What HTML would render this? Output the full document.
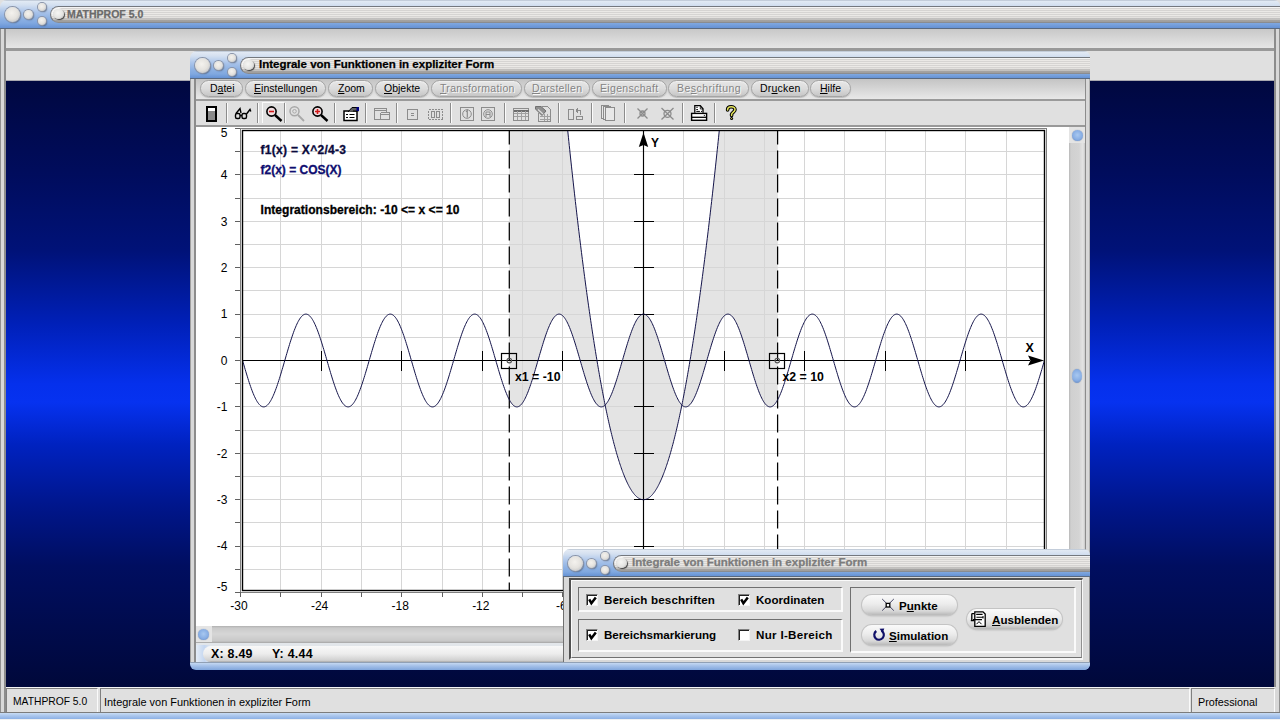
<!DOCTYPE html>
<html><head><meta charset="utf-8">
<style>
*{margin:0;padding:0;box-sizing:border-box}
html,body{width:1280px;height:720px;overflow:hidden;background:#e0e0e0;font-family:"Liberation Sans",sans-serif}
.a{position:absolute}
.tb{position:absolute;height:28px;background:linear-gradient(#a4b0c0 0px,#e2eaf4 1px,#d4e0f0 5px,#aac4ea 12px,#8cb0e2 19px,#80a8e0 23px,#6692d4 27px,#5a6a80 27px,#5a6a80 28px);border-top-left-radius:7px;border-top-right-radius:6px;overflow:hidden}
.pill{position:absolute;left:50px;top:6px;height:17px;right:0;border-radius:9px 0 0 9px;border:1px solid #74787e;border-right:none;border-bottom-color:#8a8c90;background:linear-gradient(rgba(0,0,0,0) 0px,rgba(0,0,0,0) 10px,rgba(90,90,90,.22) 12px,rgba(50,50,50,.45) 15px),repeating-linear-gradient(#ebe9e6 0px,#ebe9e6 1px,#d6d4d2 1px,#d6d4d2 2px);box-shadow:inset 0 1px 0 #f4f4f4}
.circ{position:absolute;border-radius:50%;background:radial-gradient(circle at 45% 40%,#f4f2ee 0%,#e4e2de 50%,#c8c8c8 78%,#7a8090 100%);box-shadow:0 0 0 1px #8a94a8,1px 1px 1.5px rgba(30,40,60,.6)}
.pc{position:absolute;left:2px;top:1.5px;width:10.5px;height:10.5px;border-radius:50%;background:radial-gradient(circle at 45% 40%,#f6f6f4 0%,#e4e4e2 55%,#c0c0c0 80%,#505050 100%);box-shadow:1px 1px 1px #404040,-1px -1px 1px #f8f8f8}
.ttl{position:absolute;top:-1px;font-weight:bold;font-size:11.5px;line-height:15px;white-space:nowrap;-webkit-text-stroke:0.25px currentColor}
.sep{position:absolute;width:2px;border-left:1px solid #a0a0a0;border-right:1px solid #f8f8f8}
.mp{position:absolute;top:80px;height:17px;border-radius:9px;background:linear-gradient(#e6e6e6,#dcdcdc 50%,#c6c6c6);border:1px solid #a4a4a4;box-shadow:0 1px 1px rgba(0,0,0,.18),inset 0 1px 1px #f0f0f0;font-size:10.5px;line-height:15px;text-align:left;padding-left:9px;color:#000;white-space:nowrap}
.mp.d{color:#848484;text-shadow:1px 1px 0 #f8f8f8}
.cb{position:absolute;width:12px;height:12px;background:#fff;border-top:1px solid #808080;border-left:1px solid #808080;border-right:1px solid #f4f4f4;border-bottom:1px solid #f4f4f4;box-shadow:inset 1px 1px 0 #202020}
.cb svg{position:absolute;left:0;top:0}
.dt{position:absolute;font-weight:bold;font-size:11.6px;line-height:14px;white-space:nowrap;color:#000}
.btn{position:absolute;border-radius:10px;background:linear-gradient(#fafafa 0%,#ececec 45%,#d8d8d8 80%,#b8b8b8 100%);box-shadow:0 0 0 1px #c4c4c4,0 1px 2px rgba(0,0,0,.25)}
.sp{position:absolute;top:688px;height:24px;border-top:1px solid #808080;border-left:1px solid #808080;border-right:1px solid #fafafa;background:#e0e0e0}
.st{position:absolute;top:696px;line-height:12px;white-space:nowrap;color:#000}
.sc{position:absolute;border-radius:50%;background:radial-gradient(circle at 50% 45%,#a8c8f0 0%,#88aee4 55%,#6c90c8 85%,#a0a8b8 100%);box-shadow:0 0 1px #7080a0}
u{text-decoration:underline;text-decoration-thickness:1px;text-underline-offset:1px}
</style></head><body>

<!-- MDI blue background -->
<div class="a" style="left:6px;top:81px;width:1268px;height:606px;background:linear-gradient(#000840 0%,#000c5c 15%,#001278 28%,#0020b8 40%,#0530ec 50%,#0632f0 53%,#0022c0 60%,#00168c 70%,#000e60 80%,#00083a 100%)"></div>

<!-- main window frame -->
<div class="a" style="left:0;top:28px;width:6px;height:660px;background:#d8d8d8;border-left:1px solid #909090;border-right:2px solid #8c8c8c"></div>
<div class="a" style="left:1274px;top:28px;width:6px;height:660px;background:#d8d8d8;border-left:2px solid #8c8c8c;border-right:1px solid #909090"></div>
<div class="a" style="left:6px;top:29px;width:1268px;height:19px;background:linear-gradient(#c8c8c8,#e6e6e6)"></div>
<div class="a" style="left:6px;top:48px;width:1268px;height:3px;background:#999"></div>
<div class="a" style="left:6px;top:51px;width:1268px;height:29px;background:#e0e0e0"></div>
<div class="a" style="left:6px;top:80px;width:1268px;height:1px;background:#a8a8b0"></div>

<!-- main title bar -->
<div class="tb" style="left:0;top:0;width:1280px;height:29px;background:linear-gradient(#a4b0c0 0px,#e2eaf4 1px,#d4e0f0 5px,#aac4ea 12px,#8cb0e2 19px,#80a8e0 23px,#6692d4 28px,#5a6a80 28px,#5a6a80 29px)">
  <div class="pill"><div class="pc"></div>
   <div class="ttl" style="left:16px;top:0px;color:#6a6a6a;font-size:10.5px">MATHPROF 5.0</div></div>
  <div class="circ" style="left:5px;top:7px;width:15px;height:15px"></div>
  <div class="circ" style="left:24px;top:10px;width:9px;height:9px"></div>
  <div class="circ" style="left:38px;top:3px;width:8px;height:8px"></div>
  <div class="circ" style="left:38px;top:17px;width:8px;height:8px"></div>
</div>


<!-- ===== inner window ===== -->
<div class="a" style="left:190px;top:70px;width:900px;height:593px;background:#d8d8d8;border-left:1px solid #a0a0a0"></div>
<div class="a" style="left:194px;top:79px;width:2px;height:584px;background:#8c8c8c"></div>
<div class="a" style="left:1085px;top:79px;width:1px;height:584px;background:#8c8c8c"></div>
<div class="a" style="left:1089px;top:70px;width:1px;height:593px;background:#b0b0b0"></div>
<!-- menubar -->
<div class="a" style="left:196px;top:79px;width:889px;height:20px;background:linear-gradient(#c4c4c4,#e8e8e8)"></div>
<div class="a" style="left:196px;top:99px;width:889px;height:2px;background:#9a9a9a"></div>
<!-- toolbar -->
<div class="a" style="left:196px;top:101px;width:889px;height:24px;background:#e0e0e0"></div>
<div class="a" style="left:196px;top:125px;width:889px;height:2px;background:#999"></div>
<!-- client -->
<div class="a" style="left:196px;top:127px;width:874px;height:499px;background:#fff"></div>
<!--PLOT START-->
<svg class="a" style="left:196px;top:127px" width="874" height="499" viewBox="196 127 874 499">
<defs><clipPath id="pc"><rect x="243" y="131" width="801" height="459"/></clipPath></defs>
<g clip-path="url(#pc)"><path d="M509.17 -660.30 L509.84 -648.73 L510.51 -637.22 L511.18 -625.76 L511.85 -614.36 L512.53 -603.02 L513.20 -591.74 L513.87 -580.52 L514.54 -569.36 L515.21 -558.25 L515.88 -547.20 L516.56 -536.21 L517.23 -525.28 L517.90 -514.40 L518.57 -503.58 L519.24 -492.82 L519.91 -482.12 L520.59 -471.48 L521.26 -460.90 L521.93 -450.37 L522.60 -439.90 L523.27 -429.49 L523.94 -419.14 L524.62 -408.84 L525.29 -398.60 L525.96 -388.42 L526.63 -378.30 L527.30 -368.24 L527.97 -358.24 L528.65 -348.29 L529.32 -338.40 L529.99 -328.57 L530.66 -318.80 L531.33 -309.08 L532.00 -299.42 L532.68 -289.82 L533.35 -280.28 L534.02 -270.80 L534.69 -261.38 L535.36 -252.01 L536.03 -242.70 L536.71 -233.45 L537.38 -224.26 L538.05 -215.12 L538.72 -206.04 L539.39 -197.02 L540.06 -188.06 L540.74 -179.16 L541.41 -170.32 L542.08 -161.53 L542.75 -152.80 L543.42 -144.13 L544.09 -135.52 L544.77 -126.96 L545.44 -118.46 L546.11 -110.02 L546.78 -101.64 L547.45 -93.32 L548.12 -85.06 L548.80 -76.85 L549.47 -68.70 L550.14 -60.61 L550.81 -52.58 L551.48 -44.60 L552.15 -36.68 L552.83 -28.82 L553.50 -21.02 L554.17 -13.28 L554.84 -5.60 L555.51 2.03 L556.18 9.60 L556.86 17.11 L557.53 24.56 L558.20 31.96 L558.87 39.30 L559.54 46.57 L560.21 53.80 L560.89 60.96 L561.56 68.06 L562.23 75.11 L562.90 82.10 L563.57 89.03 L564.24 95.90 L564.92 102.72 L565.59 109.48 L566.26 116.18 L566.93 122.82 L567.60 129.40 L568.27 135.92 L568.95 142.39 L569.62 148.80 L570.29 155.15 L570.96 161.44 L571.63 167.68 L572.30 173.86 L572.98 179.97 L573.65 186.04 L574.32 192.04 L574.99 197.98 L575.66 203.87 L576.33 209.70 L577.01 215.47 L577.68 221.18 L578.35 226.84 L579.02 232.44 L579.69 237.98 L580.36 243.46 L581.04 248.88 L581.71 254.24 L582.38 259.55 L583.05 264.80 L583.72 269.99 L584.39 275.12 L585.07 280.20 L585.74 285.22 L586.41 290.18 L587.08 295.08 L587.75 299.92 L588.42 304.70 L589.10 309.43 L589.77 314.10 L590.44 318.71 L591.11 323.26 L591.78 327.76 L592.45 332.20 L593.13 336.57 L593.80 340.90 L594.47 345.16 L595.14 349.36 L595.81 353.51 L596.48 357.60 L597.16 361.63 L597.83 365.60 L598.50 369.52 L599.17 373.38 L599.84 377.18 L600.51 380.92 L601.19 384.60 L601.86 388.22 L602.53 391.79 L603.20 395.30 L603.87 398.75 L604.54 402.14 L605.22 405.48 L605.89 408.76 L606.56 411.98 L607.23 415.14 L607.90 418.24 L608.57 421.28 L609.25 424.27 L609.92 427.20 L610.59 430.07 L611.26 432.88 L611.93 435.64 L612.60 438.34 L613.28 440.98 L613.95 443.56 L614.62 446.08 L615.29 448.54 L615.96 450.95 L616.63 453.30 L617.31 455.59 L617.98 457.82 L618.65 460.00 L619.32 462.12 L619.99 464.18 L620.66 466.18 L621.34 468.12 L622.01 470.00 L622.68 471.83 L623.35 473.60 L624.02 475.31 L624.69 476.96 L625.37 478.56 L626.04 480.10 L626.71 481.57 L627.38 483.00 L628.05 484.36 L628.72 485.66 L629.40 486.91 L630.07 488.10 L630.74 489.23 L631.41 490.30 L632.08 491.32 L632.75 492.28 L633.43 493.17 L634.10 494.02 L634.77 494.80 L635.44 495.52 L636.11 496.19 L636.78 496.80 L637.46 497.35 L638.13 497.84 L638.80 498.28 L639.47 498.66 L640.14 498.98 L640.81 499.24 L641.49 499.44 L642.16 499.58 L642.83 499.67 L643.50 499.70 L644.17 499.67 L644.84 499.58 L645.51 499.44 L646.19 499.24 L646.86 498.98 L647.53 498.66 L648.20 498.28 L648.87 497.84 L649.54 497.35 L650.22 496.80 L650.89 496.19 L651.56 495.52 L652.23 494.80 L652.90 494.02 L653.57 493.17 L654.25 492.28 L654.92 491.32 L655.59 490.30 L656.26 489.23 L656.93 488.10 L657.60 486.91 L658.28 485.66 L658.95 484.36 L659.62 483.00 L660.29 481.57 L660.96 480.10 L661.63 478.56 L662.31 476.96 L662.98 475.31 L663.65 473.60 L664.32 471.83 L664.99 470.00 L665.66 468.12 L666.34 466.18 L667.01 464.18 L667.68 462.12 L668.35 460.00 L669.02 457.82 L669.69 455.59 L670.37 453.30 L671.04 450.95 L671.71 448.54 L672.38 446.08 L673.05 443.56 L673.72 440.98 L674.40 438.34 L675.07 435.64 L675.74 432.88 L676.41 430.07 L677.08 427.20 L677.75 424.27 L678.43 421.28 L679.10 418.24 L679.77 415.14 L680.44 411.98 L681.11 408.76 L681.78 405.48 L682.46 402.14 L683.13 398.75 L683.80 395.30 L684.47 391.79 L685.14 388.22 L685.81 384.60 L686.49 380.92 L687.16 377.18 L687.83 373.38 L688.50 369.52 L689.17 365.60 L689.84 361.63 L690.52 357.60 L691.19 353.51 L691.86 349.36 L692.53 345.16 L693.20 340.90 L693.87 336.57 L694.55 332.20 L695.22 327.76 L695.89 323.26 L696.56 318.71 L697.23 314.10 L697.90 309.43 L698.58 304.70 L699.25 299.92 L699.92 295.08 L700.59 290.18 L701.26 285.22 L701.93 280.20 L702.61 275.12 L703.28 269.99 L703.95 264.80 L704.62 259.55 L705.29 254.24 L705.96 248.88 L706.64 243.46 L707.31 237.98 L707.98 232.44 L708.65 226.84 L709.32 221.18 L709.99 215.47 L710.67 209.70 L711.34 203.87 L712.01 197.98 L712.68 192.04 L713.35 186.04 L714.02 179.97 L714.70 173.86 L715.37 167.68 L716.04 161.44 L716.71 155.15 L717.38 148.80 L718.05 142.39 L718.73 135.92 L719.40 129.40 L720.07 122.82 L720.74 116.18 L721.41 109.48 L722.08 102.72 L722.76 95.90 L723.43 89.03 L724.10 82.10 L724.77 75.11 L725.44 68.06 L726.11 60.96 L726.79 53.80 L727.46 46.57 L728.13 39.30 L728.80 31.96 L729.47 24.56 L730.14 17.11 L730.82 9.60 L731.49 2.03 L732.16 -5.60 L732.83 -13.28 L733.50 -21.02 L734.17 -28.82 L734.85 -36.68 L735.52 -44.60 L736.19 -52.58 L736.86 -60.61 L737.53 -68.70 L738.20 -76.85 L738.88 -85.06 L739.55 -93.32 L740.22 -101.64 L740.89 -110.02 L741.56 -118.46 L742.23 -126.96 L742.91 -135.52 L743.58 -144.13 L744.25 -152.80 L744.92 -161.53 L745.59 -170.32 L746.26 -179.16 L746.94 -188.06 L747.61 -197.02 L748.28 -206.04 L748.95 -215.12 L749.62 -224.26 L750.29 -233.45 L750.97 -242.70 L751.64 -252.01 L752.31 -261.38 L752.98 -270.80 L753.65 -280.28 L754.32 -289.82 L755.00 -299.42 L755.67 -309.08 L756.34 -318.80 L757.01 -328.57 L757.68 -338.40 L758.35 -348.29 L759.03 -358.24 L759.70 -368.24 L760.37 -378.30 L761.04 -388.42 L761.71 -398.60 L762.38 -408.84 L763.06 -419.14 L763.73 -429.49 L764.40 -439.90 L765.07 -450.37 L765.74 -460.90 L766.41 -471.48 L767.09 -482.12 L767.76 -492.82 L768.43 -503.58 L769.10 -514.40 L769.77 -525.28 L770.44 -536.21 L771.12 -547.20 L771.79 -558.25 L772.46 -569.36 L773.13 -580.52 L773.80 -591.74 L774.47 -603.02 L775.15 -614.36 L775.82 -625.76 L776.49 -637.22 L777.16 -648.73 L777.83 -660.30 L777.83 399.43 L777.16 400.65 L776.49 401.76 L775.82 402.77 L775.15 403.67 L774.47 404.47 L773.80 405.15 L773.13 405.73 L772.46 406.19 L771.79 406.54 L771.12 406.77 L770.44 406.89 L769.77 406.89 L769.10 406.77 L768.43 406.54 L767.76 406.19 L767.09 405.73 L766.41 405.16 L765.74 404.47 L765.07 403.68 L764.40 402.78 L763.73 401.77 L763.06 400.66 L762.38 399.44 L761.71 398.13 L761.04 396.73 L760.37 395.24 L759.70 393.66 L759.03 391.99 L758.35 390.25 L757.68 388.43 L757.01 386.55 L756.34 384.59 L755.67 382.58 L755.00 380.52 L754.32 378.40 L753.65 376.24 L752.98 374.04 L752.31 371.80 L751.64 369.54 L750.97 367.25 L750.29 364.95 L749.62 362.63 L748.95 360.32 L748.28 358.00 L747.61 355.68 L746.94 353.38 L746.26 351.10 L745.59 348.84 L744.92 346.61 L744.25 344.42 L743.58 342.26 L742.91 340.15 L742.23 338.09 L741.56 336.09 L740.89 334.15 L740.22 332.27 L739.55 330.47 L738.88 328.74 L738.20 327.09 L737.53 325.52 L736.86 324.04 L736.19 322.65 L735.52 321.36 L734.85 320.16 L734.17 319.06 L733.50 318.07 L732.83 317.19 L732.16 316.41 L731.49 315.74 L730.82 315.19 L730.14 314.74 L729.47 314.42 L728.80 314.20 L728.13 314.11 L727.46 314.13 L726.79 314.26 L726.11 314.51 L725.44 314.88 L724.77 315.36 L724.10 315.95 L723.43 316.65 L722.76 317.47 L722.08 318.39 L721.41 319.41 L720.74 320.54 L720.07 321.77 L719.40 323.09 L718.73 324.51 L718.05 326.02 L717.38 327.62 L716.71 329.29 L716.04 331.05 L715.37 332.88 L714.70 334.78 L714.02 336.74 L713.35 338.76 L712.68 340.84 L712.01 342.96 L711.34 345.13 L710.67 347.34 L709.99 349.58 L709.32 351.85 L708.65 354.13 L707.98 356.44 L707.31 358.76 L706.64 361.07 L705.96 363.39 L705.29 365.70 L704.62 368.00 L703.95 370.28 L703.28 372.54 L702.61 374.76 L701.93 376.95 L701.26 379.10 L700.59 381.20 L699.92 383.25 L699.25 385.24 L698.58 387.17 L697.90 389.04 L697.23 390.83 L696.56 392.55 L695.89 394.18 L695.22 395.74 L694.55 397.20 L693.87 398.57 L693.20 399.85 L692.53 401.03 L691.86 402.11 L691.19 403.08 L690.52 403.95 L689.84 404.71 L689.17 405.36 L688.50 405.90 L687.83 406.32 L687.16 406.63 L686.49 406.82 L685.81 406.90 L685.14 406.86 L684.47 406.71 L683.80 406.44 L683.13 406.05 L682.46 405.55 L681.78 404.94 L681.11 404.22 L680.44 403.39 L679.77 402.45 L679.10 401.41 L678.43 400.26 L677.75 399.01 L677.08 397.67 L676.41 396.24 L675.74 394.72 L675.07 393.11 L674.40 391.42 L673.72 389.65 L673.05 387.81 L672.38 385.90 L671.71 383.92 L671.04 381.89 L670.37 379.81 L669.69 377.68 L669.02 375.50 L668.35 373.29 L667.68 371.04 L667.01 368.77 L666.34 366.48 L665.66 364.17 L664.99 361.85 L664.32 359.54 L663.65 357.22 L662.98 354.91 L662.31 352.61 L661.63 350.34 L660.96 348.09 L660.29 345.87 L659.62 343.69 L658.95 341.55 L658.28 339.45 L657.60 337.41 L656.93 335.43 L656.26 333.51 L655.59 331.66 L654.92 329.88 L654.25 328.17 L653.57 326.55 L652.90 325.01 L652.23 323.56 L651.56 322.20 L650.89 320.94 L650.22 319.78 L649.54 318.72 L648.87 317.76 L648.20 316.91 L647.53 316.17 L646.86 315.54 L646.19 315.02 L645.51 314.62 L644.84 314.33 L644.17 314.16 L643.50 314.10 L642.83 314.16 L642.16 314.33 L641.49 314.62 L640.81 315.02 L640.14 315.54 L639.47 316.17 L638.80 316.91 L638.13 317.76 L637.46 318.72 L636.78 319.78 L636.11 320.94 L635.44 322.20 L634.77 323.56 L634.10 325.01 L633.43 326.55 L632.75 328.17 L632.08 329.88 L631.41 331.66 L630.74 333.51 L630.07 335.43 L629.40 337.41 L628.72 339.45 L628.05 341.55 L627.38 343.69 L626.71 345.87 L626.04 348.09 L625.37 350.34 L624.69 352.61 L624.02 354.91 L623.35 357.22 L622.68 359.54 L622.01 361.85 L621.34 364.17 L620.66 366.48 L619.99 368.77 L619.32 371.04 L618.65 373.29 L617.98 375.50 L617.31 377.68 L616.63 379.81 L615.96 381.89 L615.29 383.92 L614.62 385.90 L613.95 387.81 L613.28 389.65 L612.60 391.42 L611.93 393.11 L611.26 394.72 L610.59 396.24 L609.92 397.67 L609.25 399.01 L608.57 400.26 L607.90 401.41 L607.23 402.45 L606.56 403.39 L605.89 404.22 L605.22 404.94 L604.54 405.55 L603.87 406.05 L603.20 406.44 L602.53 406.71 L601.86 406.86 L601.19 406.90 L600.51 406.82 L599.84 406.63 L599.17 406.32 L598.50 405.90 L597.83 405.36 L597.16 404.71 L596.48 403.95 L595.81 403.08 L595.14 402.11 L594.47 401.03 L593.80 399.85 L593.13 398.57 L592.45 397.20 L591.78 395.74 L591.11 394.18 L590.44 392.55 L589.77 390.83 L589.10 389.04 L588.42 387.17 L587.75 385.24 L587.08 383.25 L586.41 381.20 L585.74 379.10 L585.07 376.95 L584.39 374.76 L583.72 372.54 L583.05 370.28 L582.38 368.00 L581.71 365.70 L581.04 363.39 L580.36 361.07 L579.69 358.76 L579.02 356.44 L578.35 354.13 L577.68 351.85 L577.01 349.58 L576.33 347.34 L575.66 345.13 L574.99 342.96 L574.32 340.84 L573.65 338.76 L572.98 336.74 L572.30 334.78 L571.63 332.88 L570.96 331.05 L570.29 329.29 L569.62 327.62 L568.95 326.02 L568.27 324.51 L567.60 323.09 L566.93 321.77 L566.26 320.54 L565.59 319.41 L564.92 318.39 L564.24 317.47 L563.57 316.65 L562.90 315.95 L562.23 315.36 L561.56 314.88 L560.89 314.51 L560.21 314.26 L559.54 314.13 L558.87 314.11 L558.20 314.20 L557.53 314.42 L556.86 314.74 L556.18 315.19 L555.51 315.74 L554.84 316.41 L554.17 317.19 L553.50 318.07 L552.83 319.06 L552.15 320.16 L551.48 321.36 L550.81 322.65 L550.14 324.04 L549.47 325.52 L548.80 327.09 L548.12 328.74 L547.45 330.47 L546.78 332.27 L546.11 334.15 L545.44 336.09 L544.77 338.09 L544.09 340.15 L543.42 342.26 L542.75 344.42 L542.08 346.61 L541.41 348.84 L540.74 351.10 L540.06 353.38 L539.39 355.68 L538.72 358.00 L538.05 360.32 L537.38 362.63 L536.71 364.95 L536.03 367.25 L535.36 369.54 L534.69 371.80 L534.02 374.04 L533.35 376.24 L532.68 378.40 L532.00 380.52 L531.33 382.58 L530.66 384.59 L529.99 386.55 L529.32 388.43 L528.65 390.25 L527.97 391.99 L527.30 393.66 L526.63 395.24 L525.96 396.73 L525.29 398.13 L524.62 399.44 L523.94 400.66 L523.27 401.77 L522.60 402.78 L521.93 403.68 L521.26 404.47 L520.59 405.16 L519.91 405.73 L519.24 406.19 L518.57 406.54 L517.90 406.77 L517.23 406.89 L516.56 406.89 L515.88 406.77 L515.21 406.54 L514.54 406.19 L513.87 405.73 L513.20 405.15 L512.53 404.47 L511.85 403.67 L511.18 402.77 L510.51 401.76 L509.84 400.65 L509.17 399.43Z" fill="#e4e4e4"/></g>
<path d="M280.5 131V590M321.5 131V590M361.5 131V590M401.5 131V590M442.5 131V590M482.5 131V590M522.5 131V590M562.5 131V590M603.5 131V590M643.5 131V590M683.5 131V590M724.5 131V590M764.5 131V590M804.5 131V590M844.5 131V590M885.5 131V590M925.5 131V590M965.5 131V590M1006.5 131V590M243 569.5H1044M243 546.5H1044M243 522.5H1044M243 499.5H1044M243 476.5H1044M243 453.5H1044M243 430.5H1044M243 406.5H1044M243 383.5H1044M243 360.5H1044M243 337.5H1044M243 314.5H1044M243 290.5H1044M243 267.5H1044M243 244.5H1044M243 221.5H1044M243 198.5H1044M243 174.5H1044M243 151.5H1044" stroke="#d6d6d6" stroke-width="1" fill="none" shape-rendering="crispEdges"/>
<path d="M240.5 128V597M240 128.5H1047M1046.5 128V593M240 592.5H1047" stroke="#808080" fill="none" shape-rendering="crispEdges"/>
<rect x="242.5" y="130.5" width="802" height="460" stroke="#000" stroke-width="1.4" fill="none"/>
<path d="M235 592.5H240M235 569.5H240M235 546.5H240M235 522.5H240M235 499.5H240M235 476.5H240M235 453.5H240M235 430.5H240M235 406.5H240M235 383.5H240M235 360.5H240M235 337.5H240M235 314.5H240M235 290.5H240M235 267.5H240M235 244.5H240M235 221.5H240M235 198.5H240M235 174.5H240M235 151.5H240M235 128.5H240M240.5 592V597M280.5 592V597M321.5 592V597M361.5 592V597M401.5 592V597M442.5 592V597M482.5 592V597M522.5 592V597M562.5 592V597M603.5 592V597M643.5 592V597M683.5 592V597M724.5 592V597M764.5 592V597M804.5 592V597M844.5 592V597M885.5 592V597M925.5 592V597M965.5 592V597M1006.5 592V597M1046.5 592V597" stroke="#606060" fill="none" shape-rendering="crispEdges"/>
<text x="227.5" y="591.0" text-anchor="end" font-size="12" fill="#000">-5</text>
<text x="227.5" y="550.4" text-anchor="end" font-size="12" fill="#000">-4</text>
<text x="227.5" y="504.0" text-anchor="end" font-size="12" fill="#000">-3</text>
<text x="227.5" y="457.6" text-anchor="end" font-size="12" fill="#000">-2</text>
<text x="227.5" y="411.2" text-anchor="end" font-size="12" fill="#000">-1</text>
<text x="227.5" y="364.8" text-anchor="end" font-size="12" fill="#000">0</text>
<text x="227.5" y="318.4" text-anchor="end" font-size="12" fill="#000">1</text>
<text x="227.5" y="272.0" text-anchor="end" font-size="12" fill="#000">2</text>
<text x="227.5" y="225.6" text-anchor="end" font-size="12" fill="#000">3</text>
<text x="227.5" y="179.2" text-anchor="end" font-size="12" fill="#000">4</text>
<text x="227.5" y="137.0" text-anchor="end" font-size="12" fill="#000">5</text>
<text x="239.0" y="610" text-anchor="middle" font-size="12" fill="#000">-30</text>
<text x="319.6" y="610" text-anchor="middle" font-size="12" fill="#000">-24</text>
<text x="400.2" y="610" text-anchor="middle" font-size="12" fill="#000">-18</text>
<text x="480.8" y="610" text-anchor="middle" font-size="12" fill="#000">-12</text>
<text x="561.4" y="610" text-anchor="middle" font-size="12" fill="#000">-6</text>
<text x="642.0" y="610" text-anchor="middle" font-size="12" fill="#000">0</text>
<text x="722.6" y="610" text-anchor="middle" font-size="12" fill="#000">6</text>
<text x="803.2" y="610" text-anchor="middle" font-size="12" fill="#000">12</text>
<text x="883.8" y="610" text-anchor="middle" font-size="12" fill="#000">18</text>
<text x="964.4" y="610" text-anchor="middle" font-size="12" fill="#000">24</text>
<text x="1045.0" y="610" text-anchor="middle" font-size="12" fill="#000">30</text>
<path d="M243 360.5H1030M643.5 131V590" stroke="#000" stroke-width="1.15" fill="none"/>
<path d="M321.5 350.5V371M401.5 350.5V371M482.5 350.5V371M562.5 350.5V371M724.5 350.5V371M804.5 350.5V371M885.5 350.5V371M965.5 350.5V371M633.5 546.5H654M633.5 499.5H654M633.5 453.5H654M633.5 406.5H654M633.5 314.5H654M633.5 267.5H654M633.5 221.5H654M633.5 174.5H654" stroke="#000" stroke-width="1" fill="none" shape-rendering="crispEdges"/>
<path d="M1044 360.5L1028 355.5L1030.5 360.5L1028 365.5Z" fill="#000"/>
<path d="M643.5 132.5L638.8 147L643.5 145L648.2 147Z" fill="#000"/>
<text x="1025.5" y="352" font-size="12.5" font-weight="bold" fill="#000">X</text>
<text x="651" y="147" font-size="12" font-weight="bold" fill="#000">Y</text>
<path d="M509.3 126.6V590" stroke="#000" stroke-width="1.25" stroke-dasharray="18 6" fill="none" clip-path="url(#pc)"/>
<path d="M777.6 126.6V590" stroke="#000" stroke-width="1.25" stroke-dasharray="18 6" fill="none" clip-path="url(#pc)"/>
<g clip-path="url(#pc)" fill="none" stroke="#14144a" stroke-width="1.0">
<path d="M240.50 353.34 L241.17 355.64 L241.84 357.96 L242.52 360.27 L243.19 362.59 L243.86 364.91 L244.53 367.21 L245.20 369.50 L245.87 371.76 L246.55 374.00 L247.22 376.20 L247.89 378.36 L248.56 380.48 L249.23 382.55 L249.90 384.56 L250.58 386.51 L251.25 388.40 L251.92 390.22 L252.59 391.96 L253.26 393.63 L253.93 395.21 L254.61 396.71 L255.28 398.11 L255.95 399.42 L256.62 400.64 L257.29 401.75 L257.96 402.76 L258.64 403.66 L259.31 404.46 L259.98 405.15 L260.65 405.72 L261.32 406.19 L261.99 406.53 L262.67 406.77 L263.34 406.88 L264.01 406.89 L264.68 406.77 L265.35 406.54 L266.02 406.20 L266.70 405.74 L267.37 405.16 L268.04 404.48 L268.71 403.69 L269.38 402.78 L270.05 401.78 L270.73 400.67 L271.40 399.46 L272.07 398.15 L272.74 396.74 L273.41 395.25 L274.08 393.67 L274.76 392.01 L275.43 390.27 L276.10 388.45 L276.77 386.56 L277.44 384.61 L278.11 382.60 L278.79 380.53 L279.46 378.42 L280.13 376.26 L280.80 374.06 L281.47 371.82 L282.14 369.56 L282.82 367.27 L283.49 364.97 L284.16 362.66 L284.83 360.34 L285.50 358.02 L286.17 355.70 L286.85 353.40 L287.52 351.12 L288.19 348.86 L288.86 346.63 L289.53 344.44 L290.20 342.28 L290.88 340.17 L291.55 338.11 L292.22 336.11 L292.89 334.17 L293.56 332.29 L294.23 330.48 L294.91 328.75 L295.58 327.10 L296.25 325.53 L296.92 324.05 L297.59 322.66 L298.26 321.37 L298.94 320.17 L299.61 319.07 L300.28 318.08 L300.95 317.19 L301.62 316.42 L302.29 315.75 L302.97 315.19 L303.64 314.75 L304.31 314.42 L304.98 314.20 L305.65 314.11 L306.32 314.12 L307.00 314.26 L307.67 314.51 L308.34 314.87 L309.01 315.35 L309.68 315.94 L310.35 316.65 L311.03 317.46 L311.70 318.38 L312.37 319.40 L313.04 320.53 L313.71 321.76 L314.38 323.08 L315.06 324.50 L315.73 326.01 L316.40 327.60 L317.07 329.28 L317.74 331.03 L318.41 332.86 L319.09 334.76 L319.76 336.72 L320.43 338.74 L321.10 340.82 L321.77 342.94 L322.44 345.11 L323.12 347.32 L323.79 349.56 L324.46 351.83 L325.13 354.11 L325.80 356.42 L326.47 358.73 L327.15 361.05 L327.82 363.37 L328.49 365.68 L329.16 367.98 L329.83 370.26 L330.50 372.52 L331.18 374.74 L331.85 376.93 L332.52 379.08 L333.19 381.18 L333.86 383.23 L334.53 385.22 L335.21 387.15 L335.88 389.02 L336.55 390.81 L337.22 392.53 L337.89 394.17 L338.56 395.72 L339.24 397.19 L339.91 398.56 L340.58 399.84 L341.25 401.02 L341.92 402.10 L342.59 403.08 L343.27 403.94 L343.94 404.70 L344.61 405.35 L345.28 405.89 L345.95 406.32 L346.62 406.63 L347.30 406.82 L347.97 406.90 L348.64 406.86 L349.31 406.71 L349.98 406.44 L350.65 406.05 L351.33 405.56 L352.00 404.95 L352.67 404.23 L353.34 403.40 L354.01 402.46 L354.68 401.42 L355.36 400.27 L356.03 399.03 L356.70 397.69 L357.37 396.25 L358.04 394.73 L358.71 393.12 L359.39 391.43 L360.06 389.66 L360.73 387.82 L361.40 385.91 L362.07 383.94 L362.74 381.91 L363.42 379.83 L364.09 377.70 L364.76 375.52 L365.43 373.31 L366.10 371.06 L366.77 368.79 L367.45 366.50 L368.12 364.19 L368.79 361.88 L369.46 359.56 L370.13 357.24 L370.80 354.93 L371.48 352.63 L372.15 350.36 L372.82 348.11 L373.49 345.89 L374.16 343.71 L374.83 341.56 L375.51 339.47 L376.18 337.43 L376.85 335.45 L377.52 333.53 L378.19 331.67 L378.86 329.89 L379.54 328.19 L380.21 326.56 L380.88 325.02 L381.55 323.57 L382.22 322.22 L382.89 320.95 L383.57 319.79 L384.24 318.73 L384.91 317.77 L385.58 316.92 L386.25 316.18 L386.92 315.55 L387.60 315.03 L388.27 314.62 L388.94 314.33 L389.61 314.16 L390.28 314.10 L390.95 314.16 L391.63 314.33 L392.30 314.62 L392.97 315.02 L393.64 315.54 L394.31 316.17 L394.98 316.91 L395.66 317.75 L396.33 318.71 L397.00 319.77 L397.67 320.93 L398.34 322.19 L399.01 323.55 L399.69 325.00 L400.36 326.54 L401.03 328.16 L401.70 329.86 L402.37 331.64 L403.04 333.49 L403.72 335.41 L404.39 337.39 L405.06 339.43 L405.73 341.53 L406.40 343.67 L407.07 345.85 L407.75 348.07 L408.42 350.32 L409.09 352.59 L409.76 354.89 L410.43 357.20 L411.10 359.51 L411.78 361.83 L412.45 364.15 L413.12 366.46 L413.79 368.75 L414.46 371.02 L415.13 373.27 L415.81 375.48 L416.48 377.66 L417.15 379.79 L417.82 381.88 L418.49 383.91 L419.16 385.88 L419.84 387.79 L420.51 389.63 L421.18 391.40 L421.85 393.09 L422.52 394.70 L423.19 396.23 L423.87 397.66 L424.54 399.00 L425.21 400.25 L425.88 401.40 L426.55 402.44 L427.22 403.38 L427.90 404.21 L428.57 404.94 L429.24 405.55 L429.91 406.05 L430.58 406.43 L431.25 406.70 L431.93 406.86 L432.60 406.90 L433.27 406.82 L433.94 406.63 L434.61 406.32 L435.28 405.90 L435.96 405.36 L436.63 404.72 L437.30 403.96 L437.97 403.09 L438.64 402.12 L439.31 401.04 L439.99 399.86 L440.66 398.59 L441.33 397.21 L442.00 395.75 L442.67 394.20 L443.34 392.56 L444.02 390.84 L444.69 389.05 L445.36 387.19 L446.03 385.26 L446.70 383.27 L447.37 381.22 L448.05 379.12 L448.72 376.97 L449.39 374.78 L450.06 372.56 L450.73 370.30 L451.40 368.02 L452.08 365.72 L452.75 363.41 L453.42 361.10 L454.09 358.78 L454.76 356.46 L455.43 354.16 L456.11 351.87 L456.78 349.60 L457.45 347.36 L458.12 345.15 L458.79 342.98 L459.46 340.86 L460.14 338.78 L460.81 336.76 L461.48 334.79 L462.15 332.90 L462.82 331.07 L463.49 329.31 L464.17 327.63 L464.84 326.04 L465.51 324.53 L466.18 323.11 L466.85 321.78 L467.52 320.55 L468.20 319.42 L468.87 318.39 L469.54 317.47 L470.21 316.66 L470.88 315.95 L471.55 315.36 L472.23 314.88 L472.90 314.51 L473.57 314.26 L474.24 314.13 L474.91 314.11 L475.58 314.20 L476.26 314.41 L476.93 314.74 L477.60 315.18 L478.27 315.74 L478.94 316.40 L479.61 317.18 L480.29 318.06 L480.96 319.06 L481.63 320.15 L482.30 321.35 L482.97 322.64 L483.64 324.03 L484.32 325.51 L484.99 327.07 L485.66 328.72 L486.33 330.45 L487.00 332.26 L487.67 334.13 L488.35 336.07 L489.02 338.07 L489.69 340.13 L490.36 342.24 L491.03 344.40 L491.70 346.59 L492.38 348.82 L493.05 351.08 L493.72 353.36 L494.39 355.66 L495.06 357.98 L495.73 360.29 L496.41 362.61 L497.08 364.93 L497.75 367.23 L498.42 369.52 L499.09 371.78 L499.76 374.02 L500.44 376.22 L501.11 378.38 L501.78 380.50 L502.45 382.56 L503.12 384.58 L503.79 386.53 L504.47 388.42 L505.14 390.23 L505.81 391.98 L506.48 393.64 L507.15 395.22 L507.82 396.72 L508.50 398.12 L509.17 399.43 L509.84 400.65 L510.51 401.76 L511.18 402.77 L511.85 403.67 L512.53 404.47 L513.20 405.15 L513.87 405.73 L514.54 406.19 L515.21 406.54 L515.88 406.77 L516.56 406.89 L517.23 406.89 L517.90 406.77 L518.57 406.54 L519.24 406.19 L519.91 405.73 L520.59 405.16 L521.26 404.47 L521.93 403.68 L522.60 402.78 L523.27 401.77 L523.94 400.66 L524.62 399.44 L525.29 398.13 L525.96 396.73 L526.63 395.24 L527.30 393.66 L527.97 391.99 L528.65 390.25 L529.32 388.43 L529.99 386.55 L530.66 384.59 L531.33 382.58 L532.00 380.52 L532.68 378.40 L533.35 376.24 L534.02 374.04 L534.69 371.80 L535.36 369.54 L536.03 367.25 L536.71 364.95 L537.38 362.63 L538.05 360.32 L538.72 358.00 L539.39 355.68 L540.06 353.38 L540.74 351.10 L541.41 348.84 L542.08 346.61 L542.75 344.42 L543.42 342.26 L544.09 340.15 L544.77 338.09 L545.44 336.09 L546.11 334.15 L546.78 332.27 L547.45 330.47 L548.12 328.74 L548.80 327.09 L549.47 325.52 L550.14 324.04 L550.81 322.65 L551.48 321.36 L552.15 320.16 L552.83 319.06 L553.50 318.07 L554.17 317.19 L554.84 316.41 L555.51 315.74 L556.18 315.19 L556.86 314.74 L557.53 314.42 L558.20 314.20 L558.87 314.11 L559.54 314.13 L560.21 314.26 L560.89 314.51 L561.56 314.88 L562.23 315.36 L562.90 315.95 L563.57 316.65 L564.24 317.47 L564.92 318.39 L565.59 319.41 L566.26 320.54 L566.93 321.77 L567.60 323.09 L568.27 324.51 L568.95 326.02 L569.62 327.62 L570.29 329.29 L570.96 331.05 L571.63 332.88 L572.30 334.78 L572.98 336.74 L573.65 338.76 L574.32 340.84 L574.99 342.96 L575.66 345.13 L576.33 347.34 L577.01 349.58 L577.68 351.85 L578.35 354.13 L579.02 356.44 L579.69 358.76 L580.36 361.07 L581.04 363.39 L581.71 365.70 L582.38 368.00 L583.05 370.28 L583.72 372.54 L584.39 374.76 L585.07 376.95 L585.74 379.10 L586.41 381.20 L587.08 383.25 L587.75 385.24 L588.42 387.17 L589.10 389.04 L589.77 390.83 L590.44 392.55 L591.11 394.18 L591.78 395.74 L592.45 397.20 L593.13 398.57 L593.80 399.85 L594.47 401.03 L595.14 402.11 L595.81 403.08 L596.48 403.95 L597.16 404.71 L597.83 405.36 L598.50 405.90 L599.17 406.32 L599.84 406.63 L600.51 406.82 L601.19 406.90 L601.86 406.86 L602.53 406.71 L603.20 406.44 L603.87 406.05 L604.54 405.55 L605.22 404.94 L605.89 404.22 L606.56 403.39 L607.23 402.45 L607.90 401.41 L608.57 400.26 L609.25 399.01 L609.92 397.67 L610.59 396.24 L611.26 394.72 L611.93 393.11 L612.60 391.42 L613.28 389.65 L613.95 387.81 L614.62 385.90 L615.29 383.92 L615.96 381.89 L616.63 379.81 L617.31 377.68 L617.98 375.50 L618.65 373.29 L619.32 371.04 L619.99 368.77 L620.66 366.48 L621.34 364.17 L622.01 361.85 L622.68 359.54 L623.35 357.22 L624.02 354.91 L624.69 352.61 L625.37 350.34 L626.04 348.09 L626.71 345.87 L627.38 343.69 L628.05 341.55 L628.72 339.45 L629.40 337.41 L630.07 335.43 L630.74 333.51 L631.41 331.66 L632.08 329.88 L632.75 328.17 L633.43 326.55 L634.10 325.01 L634.77 323.56 L635.44 322.20 L636.11 320.94 L636.78 319.78 L637.46 318.72 L638.13 317.76 L638.80 316.91 L639.47 316.17 L640.14 315.54 L640.81 315.02 L641.49 314.62 L642.16 314.33 L642.83 314.16 L643.50 314.10 L644.17 314.16 L644.84 314.33 L645.51 314.62 L646.19 315.02 L646.86 315.54 L647.53 316.17 L648.20 316.91 L648.87 317.76 L649.54 318.72 L650.22 319.78 L650.89 320.94 L651.56 322.20 L652.23 323.56 L652.90 325.01 L653.57 326.55 L654.25 328.17 L654.92 329.88 L655.59 331.66 L656.26 333.51 L656.93 335.43 L657.60 337.41 L658.28 339.45 L658.95 341.55 L659.62 343.69 L660.29 345.87 L660.96 348.09 L661.63 350.34 L662.31 352.61 L662.98 354.91 L663.65 357.22 L664.32 359.54 L664.99 361.85 L665.66 364.17 L666.34 366.48 L667.01 368.77 L667.68 371.04 L668.35 373.29 L669.02 375.50 L669.69 377.68 L670.37 379.81 L671.04 381.89 L671.71 383.92 L672.38 385.90 L673.05 387.81 L673.72 389.65 L674.40 391.42 L675.07 393.11 L675.74 394.72 L676.41 396.24 L677.08 397.67 L677.75 399.01 L678.43 400.26 L679.10 401.41 L679.77 402.45 L680.44 403.39 L681.11 404.22 L681.78 404.94 L682.46 405.55 L683.13 406.05 L683.80 406.44 L684.47 406.71 L685.14 406.86 L685.81 406.90 L686.49 406.82 L687.16 406.63 L687.83 406.32 L688.50 405.90 L689.17 405.36 L689.84 404.71 L690.52 403.95 L691.19 403.08 L691.86 402.11 L692.53 401.03 L693.20 399.85 L693.87 398.57 L694.55 397.20 L695.22 395.74 L695.89 394.18 L696.56 392.55 L697.23 390.83 L697.90 389.04 L698.58 387.17 L699.25 385.24 L699.92 383.25 L700.59 381.20 L701.26 379.10 L701.93 376.95 L702.61 374.76 L703.28 372.54 L703.95 370.28 L704.62 368.00 L705.29 365.70 L705.96 363.39 L706.64 361.07 L707.31 358.76 L707.98 356.44 L708.65 354.13 L709.32 351.85 L709.99 349.58 L710.67 347.34 L711.34 345.13 L712.01 342.96 L712.68 340.84 L713.35 338.76 L714.02 336.74 L714.70 334.78 L715.37 332.88 L716.04 331.05 L716.71 329.29 L717.38 327.62 L718.05 326.02 L718.73 324.51 L719.40 323.09 L720.07 321.77 L720.74 320.54 L721.41 319.41 L722.08 318.39 L722.76 317.47 L723.43 316.65 L724.10 315.95 L724.77 315.36 L725.44 314.88 L726.11 314.51 L726.79 314.26 L727.46 314.13 L728.13 314.11 L728.80 314.20 L729.47 314.42 L730.14 314.74 L730.82 315.19 L731.49 315.74 L732.16 316.41 L732.83 317.19 L733.50 318.07 L734.17 319.06 L734.85 320.16 L735.52 321.36 L736.19 322.65 L736.86 324.04 L737.53 325.52 L738.20 327.09 L738.88 328.74 L739.55 330.47 L740.22 332.27 L740.89 334.15 L741.56 336.09 L742.23 338.09 L742.91 340.15 L743.58 342.26 L744.25 344.42 L744.92 346.61 L745.59 348.84 L746.26 351.10 L746.94 353.38 L747.61 355.68 L748.28 358.00 L748.95 360.32 L749.62 362.63 L750.29 364.95 L750.97 367.25 L751.64 369.54 L752.31 371.80 L752.98 374.04 L753.65 376.24 L754.32 378.40 L755.00 380.52 L755.67 382.58 L756.34 384.59 L757.01 386.55 L757.68 388.43 L758.35 390.25 L759.03 391.99 L759.70 393.66 L760.37 395.24 L761.04 396.73 L761.71 398.13 L762.38 399.44 L763.06 400.66 L763.73 401.77 L764.40 402.78 L765.07 403.68 L765.74 404.47 L766.41 405.16 L767.09 405.73 L767.76 406.19 L768.43 406.54 L769.10 406.77 L769.77 406.89 L770.44 406.89 L771.12 406.77 L771.79 406.54 L772.46 406.19 L773.13 405.73 L773.80 405.15 L774.47 404.47 L775.15 403.67 L775.82 402.77 L776.49 401.76 L777.16 400.65 L777.83 399.43 L778.50 398.12 L779.18 396.72 L779.85 395.22 L780.52 393.64 L781.19 391.98 L781.86 390.23 L782.53 388.42 L783.21 386.53 L783.88 384.58 L784.55 382.56 L785.22 380.50 L785.89 378.38 L786.56 376.22 L787.24 374.02 L787.91 371.78 L788.58 369.52 L789.25 367.23 L789.92 364.93 L790.59 362.61 L791.27 360.29 L791.94 357.98 L792.61 355.66 L793.28 353.36 L793.95 351.08 L794.62 348.82 L795.30 346.59 L795.97 344.40 L796.64 342.24 L797.31 340.13 L797.98 338.07 L798.65 336.07 L799.33 334.13 L800.00 332.26 L800.67 330.45 L801.34 328.72 L802.01 327.07 L802.68 325.51 L803.36 324.03 L804.03 322.64 L804.70 321.35 L805.37 320.15 L806.04 319.06 L806.71 318.06 L807.39 317.18 L808.06 316.40 L808.73 315.74 L809.40 315.18 L810.07 314.74 L810.74 314.41 L811.42 314.20 L812.09 314.11 L812.76 314.13 L813.43 314.26 L814.10 314.51 L814.77 314.88 L815.45 315.36 L816.12 315.95 L816.79 316.66 L817.46 317.47 L818.13 318.39 L818.80 319.42 L819.48 320.55 L820.15 321.78 L820.82 323.11 L821.49 324.53 L822.16 326.04 L822.83 327.63 L823.51 329.31 L824.18 331.07 L824.85 332.90 L825.52 334.79 L826.19 336.76 L826.86 338.78 L827.54 340.86 L828.21 342.98 L828.88 345.15 L829.55 347.36 L830.22 349.60 L830.89 351.87 L831.57 354.16 L832.24 356.46 L832.91 358.78 L833.58 361.10 L834.25 363.41 L834.92 365.72 L835.60 368.02 L836.27 370.30 L836.94 372.56 L837.61 374.78 L838.28 376.97 L838.95 379.12 L839.63 381.22 L840.30 383.27 L840.97 385.26 L841.64 387.19 L842.31 389.05 L842.98 390.84 L843.66 392.56 L844.33 394.20 L845.00 395.75 L845.67 397.21 L846.34 398.59 L847.01 399.86 L847.69 401.04 L848.36 402.12 L849.03 403.09 L849.70 403.96 L850.37 404.72 L851.04 405.36 L851.72 405.90 L852.39 406.32 L853.06 406.63 L853.73 406.82 L854.40 406.90 L855.07 406.86 L855.75 406.70 L856.42 406.43 L857.09 406.05 L857.76 405.55 L858.43 404.94 L859.10 404.21 L859.78 403.38 L860.45 402.44 L861.12 401.40 L861.79 400.25 L862.46 399.00 L863.13 397.66 L863.81 396.23 L864.48 394.70 L865.15 393.09 L865.82 391.40 L866.49 389.63 L867.16 387.79 L867.84 385.88 L868.51 383.91 L869.18 381.88 L869.85 379.79 L870.52 377.66 L871.19 375.48 L871.87 373.27 L872.54 371.02 L873.21 368.75 L873.88 366.46 L874.55 364.15 L875.22 361.83 L875.90 359.51 L876.57 357.20 L877.24 354.89 L877.91 352.59 L878.58 350.32 L879.25 348.07 L879.93 345.85 L880.60 343.67 L881.27 341.53 L881.94 339.43 L882.61 337.39 L883.28 335.41 L883.96 333.49 L884.63 331.64 L885.30 329.86 L885.97 328.16 L886.64 326.54 L887.31 325.00 L887.99 323.55 L888.66 322.19 L889.33 320.93 L890.00 319.77 L890.67 318.71 L891.34 317.75 L892.02 316.91 L892.69 316.17 L893.36 315.54 L894.03 315.02 L894.70 314.62 L895.37 314.33 L896.05 314.16 L896.72 314.10 L897.39 314.16 L898.06 314.33 L898.73 314.62 L899.40 315.03 L900.08 315.55 L900.75 316.18 L901.42 316.92 L902.09 317.77 L902.76 318.73 L903.43 319.79 L904.11 320.95 L904.78 322.22 L905.45 323.57 L906.12 325.02 L906.79 326.56 L907.46 328.19 L908.14 329.89 L908.81 331.67 L909.48 333.53 L910.15 335.45 L910.82 337.43 L911.49 339.47 L912.17 341.56 L912.84 343.71 L913.51 345.89 L914.18 348.11 L914.85 350.36 L915.52 352.63 L916.20 354.93 L916.87 357.24 L917.54 359.56 L918.21 361.88 L918.88 364.19 L919.55 366.50 L920.23 368.79 L920.90 371.06 L921.57 373.31 L922.24 375.52 L922.91 377.70 L923.58 379.83 L924.26 381.91 L924.93 383.94 L925.60 385.91 L926.27 387.82 L926.94 389.66 L927.61 391.43 L928.29 393.12 L928.96 394.73 L929.63 396.25 L930.30 397.69 L930.97 399.03 L931.64 400.27 L932.32 401.42 L932.99 402.46 L933.66 403.40 L934.33 404.23 L935.00 404.95 L935.67 405.56 L936.35 406.05 L937.02 406.44 L937.69 406.71 L938.36 406.86 L939.03 406.90 L939.70 406.82 L940.38 406.63 L941.05 406.32 L941.72 405.89 L942.39 405.35 L943.06 404.70 L943.73 403.94 L944.41 403.08 L945.08 402.10 L945.75 401.02 L946.42 399.84 L947.09 398.56 L947.76 397.19 L948.44 395.72 L949.11 394.17 L949.78 392.53 L950.45 390.81 L951.12 389.02 L951.79 387.15 L952.47 385.22 L953.14 383.23 L953.81 381.18 L954.48 379.08 L955.15 376.93 L955.82 374.74 L956.50 372.52 L957.17 370.26 L957.84 367.98 L958.51 365.68 L959.18 363.37 L959.85 361.05 L960.53 358.73 L961.20 356.42 L961.87 354.11 L962.54 351.83 L963.21 349.56 L963.88 347.32 L964.56 345.11 L965.23 342.94 L965.90 340.82 L966.57 338.74 L967.24 336.72 L967.91 334.76 L968.59 332.86 L969.26 331.03 L969.93 329.28 L970.60 327.60 L971.27 326.01 L971.94 324.50 L972.62 323.08 L973.29 321.76 L973.96 320.53 L974.63 319.40 L975.30 318.38 L975.97 317.46 L976.65 316.65 L977.32 315.94 L977.99 315.35 L978.66 314.87 L979.33 314.51 L980.00 314.26 L980.68 314.12 L981.35 314.11 L982.02 314.20 L982.69 314.42 L983.36 314.75 L984.03 315.19 L984.71 315.75 L985.38 316.42 L986.05 317.19 L986.72 318.08 L987.39 319.07 L988.06 320.17 L988.74 321.37 L989.41 322.66 L990.08 324.05 L990.75 325.53 L991.42 327.10 L992.09 328.75 L992.77 330.48 L993.44 332.29 L994.11 334.17 L994.78 336.11 L995.45 338.11 L996.12 340.17 L996.80 342.28 L997.47 344.44 L998.14 346.63 L998.81 348.86 L999.48 351.12 L1000.15 353.40 L1000.83 355.70 L1001.50 358.02 L1002.17 360.34 L1002.84 362.66 L1003.51 364.97 L1004.18 367.27 L1004.86 369.56 L1005.53 371.82 L1006.20 374.06 L1006.87 376.26 L1007.54 378.42 L1008.21 380.53 L1008.89 382.60 L1009.56 384.61 L1010.23 386.56 L1010.90 388.45 L1011.57 390.27 L1012.24 392.01 L1012.92 393.67 L1013.59 395.25 L1014.26 396.74 L1014.93 398.15 L1015.60 399.46 L1016.27 400.67 L1016.95 401.78 L1017.62 402.78 L1018.29 403.69 L1018.96 404.48 L1019.63 405.16 L1020.30 405.74 L1020.98 406.20 L1021.65 406.54 L1022.32 406.77 L1022.99 406.89 L1023.66 406.88 L1024.33 406.77 L1025.01 406.53 L1025.68 406.19 L1026.35 405.72 L1027.02 405.15 L1027.69 404.46 L1028.36 403.66 L1029.04 402.76 L1029.71 401.75 L1030.38 400.64 L1031.05 399.42 L1031.72 398.11 L1032.39 396.71 L1033.07 395.21 L1033.74 393.63 L1034.41 391.96 L1035.08 390.22 L1035.75 388.40 L1036.42 386.51 L1037.10 384.56 L1037.77 382.55 L1038.44 380.48 L1039.11 378.36 L1039.78 376.20 L1040.45 374.00 L1041.13 371.76 L1041.80 369.50 L1042.47 367.21 L1043.14 364.91 L1043.81 362.59 L1044.48 360.27 L1045.16 357.96 L1045.83 355.64 L1046.50 353.34"/>
<path d="M556.18 9.60 L556.62 14.49 L557.06 19.35 L557.49 24.19 L557.93 29.01 L558.37 33.80 L558.80 38.56 L559.24 43.31 L559.68 48.02 L560.11 52.72 L560.55 57.38 L560.99 62.03 L561.42 66.65 L561.86 71.24 L562.30 75.81 L562.73 80.36 L563.17 84.88 L563.61 89.38 L564.04 93.85 L564.48 98.30 L564.92 102.72 L565.35 107.12 L565.79 111.49 L566.22 115.84 L566.66 120.17 L567.10 124.47 L567.53 128.74 L567.97 132.99 L568.41 137.22 L568.84 141.42 L569.28 145.60 L569.72 149.76 L570.15 153.89 L570.59 157.99 L571.03 162.07 L571.46 166.13 L571.90 170.16 L572.34 174.16 L572.77 178.15 L573.21 182.10 L573.65 186.04 L574.08 189.94 L574.52 193.83 L574.96 197.69 L575.39 201.52 L575.83 205.33 L576.27 209.12 L576.70 212.88 L577.14 216.62 L577.58 220.33 L578.01 224.02 L578.45 227.68 L578.89 231.32 L579.32 234.94 L579.76 238.53 L580.20 242.09 L580.63 245.63 L581.07 249.15 L581.51 252.64 L581.94 256.11 L582.38 259.55 L582.82 262.97 L583.25 266.36 L583.69 269.73 L584.12 273.08 L584.56 276.40 L585.00 279.69 L585.43 282.97 L585.87 286.21 L586.31 289.43 L586.74 292.63 L587.18 295.81 L587.62 298.96 L588.05 302.08 L588.49 305.18 L588.93 308.25 L589.36 311.31 L589.80 314.33 L590.24 317.33 L590.67 320.31 L591.11 323.26 L591.55 326.19 L591.98 329.10 L592.42 331.98 L592.86 334.83 L593.29 337.66 L593.73 340.47 L594.17 343.25 L594.60 346.00 L595.04 348.74 L595.48 351.44 L595.91 354.13 L596.35 356.79 L596.79 359.42 L597.22 362.03 L597.66 364.62 L598.10 367.18 L598.53 369.71 L598.97 372.22 L599.41 374.71 L599.84 377.18 L600.28 379.61 L600.71 382.03 L601.15 384.42 L601.59 386.78 L602.02 389.12 L602.46 391.44 L602.90 393.73 L603.33 395.99 L603.77 398.24 L604.21 400.45 L604.64 402.65 L605.08 404.82 L605.52 406.96 L605.95 409.08 L606.39 411.18 L606.83 413.25 L607.26 415.29 L607.70 417.31 L608.14 419.31 L608.57 421.28 L609.01 423.23 L609.45 425.16 L609.88 427.05 L610.32 428.93 L610.76 430.78 L611.19 432.61 L611.63 434.41 L612.07 436.18 L612.50 437.94 L612.94 439.66 L613.38 441.37 L613.81 443.04 L614.25 444.70 L614.69 446.33 L615.12 447.93 L615.56 449.51 L616.00 451.07 L616.43 452.60 L616.87 454.11 L617.31 455.59 L617.74 457.05 L618.18 458.48 L618.61 459.89 L619.05 461.28 L619.49 462.64 L619.92 463.97 L620.36 465.28 L620.80 466.57 L621.23 467.83 L621.67 469.07 L622.11 470.28 L622.54 471.47 L622.98 472.63 L623.42 473.77 L623.85 474.89 L624.29 475.98 L624.73 477.05 L625.16 478.09 L625.60 479.10 L626.04 480.10 L626.47 481.06 L626.91 482.01 L627.35 482.93 L627.78 483.82 L628.22 484.69 L628.66 485.54 L629.09 486.36 L629.53 487.15 L629.97 487.93 L630.40 488.67 L630.84 489.40 L631.28 490.09 L631.71 490.77 L632.15 491.42 L632.59 492.04 L633.02 492.64 L633.46 493.22 L633.90 493.77 L634.33 494.30 L634.77 494.80 L635.20 495.28 L635.64 495.73 L636.08 496.16 L636.51 496.56 L636.95 496.94 L637.39 497.30 L637.82 497.63 L638.26 497.94 L638.70 498.22 L639.13 498.47 L639.57 498.71 L640.01 498.92 L640.44 499.10 L640.88 499.26 L641.32 499.39 L641.75 499.50 L642.19 499.59 L642.63 499.65 L643.06 499.69 L643.50 499.70 L643.94 499.69 L644.37 499.65 L644.81 499.59 L645.25 499.50 L645.68 499.39 L646.12 499.26 L646.56 499.10 L646.99 498.92 L647.43 498.71 L647.87 498.47 L648.30 498.22 L648.74 497.94 L649.18 497.63 L649.61 497.30 L650.05 496.94 L650.49 496.56 L650.92 496.16 L651.36 495.73 L651.80 495.28 L652.23 494.80 L652.67 494.30 L653.10 493.77 L653.54 493.22 L653.98 492.64 L654.41 492.04 L654.85 491.42 L655.29 490.77 L655.72 490.09 L656.16 489.40 L656.60 488.67 L657.03 487.93 L657.47 487.15 L657.91 486.36 L658.34 485.54 L658.78 484.69 L659.22 483.82 L659.65 482.93 L660.09 482.01 L660.53 481.06 L660.96 480.10 L661.40 479.10 L661.84 478.09 L662.27 477.05 L662.71 475.98 L663.15 474.89 L663.58 473.77 L664.02 472.63 L664.46 471.47 L664.89 470.28 L665.33 469.07 L665.77 467.83 L666.20 466.57 L666.64 465.28 L667.08 463.97 L667.51 462.64 L667.95 461.28 L668.39 459.89 L668.82 458.48 L669.26 457.05 L669.69 455.59 L670.13 454.11 L670.57 452.60 L671.00 451.07 L671.44 449.51 L671.88 447.93 L672.31 446.33 L672.75 444.70 L673.19 443.04 L673.62 441.37 L674.06 439.66 L674.50 437.94 L674.93 436.18 L675.37 434.41 L675.81 432.61 L676.24 430.78 L676.68 428.93 L677.12 427.05 L677.55 425.16 L677.99 423.23 L678.43 421.28 L678.86 419.31 L679.30 417.31 L679.74 415.29 L680.17 413.25 L680.61 411.18 L681.05 409.08 L681.48 406.96 L681.92 404.82 L682.36 402.65 L682.79 400.45 L683.23 398.24 L683.67 395.99 L684.10 393.73 L684.54 391.44 L684.98 389.12 L685.41 386.78 L685.85 384.42 L686.29 382.03 L686.72 379.61 L687.16 377.18 L687.59 374.71 L688.03 372.22 L688.47 369.71 L688.90 367.18 L689.34 364.62 L689.78 362.03 L690.21 359.42 L690.65 356.79 L691.09 354.13 L691.52 351.44 L691.96 348.74 L692.40 346.00 L692.83 343.25 L693.27 340.47 L693.71 337.66 L694.14 334.83 L694.58 331.98 L695.02 329.10 L695.45 326.19 L695.89 323.26 L696.33 320.31 L696.76 317.33 L697.20 314.33 L697.64 311.31 L698.07 308.25 L698.51 305.18 L698.95 302.08 L699.38 298.96 L699.82 295.81 L700.26 292.63 L700.69 289.43 L701.13 286.21 L701.57 282.97 L702.00 279.69 L702.44 276.40 L702.88 273.08 L703.31 269.73 L703.75 266.36 L704.18 262.97 L704.62 259.55 L705.06 256.11 L705.49 252.64 L705.93 249.15 L706.37 245.63 L706.80 242.09 L707.24 238.53 L707.68 234.94 L708.11 231.32 L708.55 227.68 L708.99 224.02 L709.42 220.33 L709.86 216.62 L710.30 212.88 L710.73 209.12 L711.17 205.33 L711.61 201.52 L712.04 197.69 L712.48 193.83 L712.92 189.94 L713.35 186.04 L713.79 182.10 L714.23 178.15 L714.66 174.16 L715.10 170.16 L715.54 166.13 L715.97 162.07 L716.41 157.99 L716.85 153.89 L717.28 149.76 L717.72 145.60 L718.16 141.42 L718.59 137.22 L719.03 132.99 L719.47 128.74 L719.90 124.47 L720.34 120.17 L720.78 115.84 L721.21 111.49 L721.65 107.12 L722.08 102.72 L722.52 98.30 L722.96 93.85 L723.39 89.38 L723.83 84.88 L724.27 80.36 L724.70 75.81 L725.14 71.24 L725.58 66.65 L726.01 62.03 L726.45 57.38 L726.89 52.72 L727.32 48.02 L727.76 43.31 L728.20 38.56 L728.63 33.80 L729.07 29.01 L729.51 24.19 L729.94 19.35 L730.38 14.49 L730.82 9.60"/>
</g>
<rect x="501.5" y="353.5" width="15" height="15" fill="none" stroke="#000" stroke-width="1.2"/>
<circle cx="509.3" cy="360.6" r="2.3" fill="none" stroke="#555" stroke-width="1.1"/>
<rect x="769.5" y="353.5" width="15" height="15" fill="none" stroke="#000" stroke-width="1.2"/>
<circle cx="777.3" cy="360.6" r="2.3" fill="none" stroke="#555" stroke-width="1.1"/>
<text x="515" y="381" font-size="12.3" font-weight="bold" fill="#000" textLength="45.5" lengthAdjust="spacing">x1 = -10</text>
<text x="782.5" y="381" font-size="12.3" font-weight="bold" fill="#000">x2 = 10</text>
<text x="260.5" y="154" font-size="12" font-weight="bold" fill="#0a0a3c" stroke="#0a0a3c" stroke-width="0.3" textLength="85.5" lengthAdjust="spacing">f1(x) = X^2/4-3</text>
<text x="260.5" y="174" font-size="12" font-weight="bold" fill="#0e0e70" stroke="#0e0e70" stroke-width="0.3" textLength="81" lengthAdjust="spacing">f2(x) = COS(X)</text>
<text x="260.5" y="214" font-size="12" font-weight="bold" fill="#000" stroke="#000" stroke-width="0.3" textLength="199" lengthAdjust="spacing">Integrationsbereich: -10 &lt;= x &lt;= 10</text>
</svg>
<!--PLOT END-->
<!-- vscroll -->
<div class="a" style="left:1069px;top:127px;width:16px;height:499px;background:linear-gradient(90deg,#b8b8b8 0,#d0d0d0 2px,#d4d4d4 10px,#e4e4e4 14px,#c8c8c8 16px)"></div>
<div class="a" style="left:1069px;top:127px;width:16px;height:16px;background:#e4e4e4"></div>
<!-- hscroll -->
<div class="a" style="left:196px;top:626px;width:889px;height:17px;background:linear-gradient(#b0b0b0 0,#cacaca 2px,#d6d6d6 8px,#c8c8c8 15px,#a4a4a4 17px)"></div>
<div class="a" style="left:196px;top:626px;width:16px;height:16px;background:#e4e4e4"></div>
<div class="sc" style="left:1072px;top:130px;width:11px;height:11px"></div>
<div class="sc" style="left:1072px;top:369px;width:10px;height:14px"></div>
<div class="sc" style="left:198px;top:629px;width:11px;height:11px"></div>
<!-- status -->
<div class="a" style="left:196px;top:643px;width:889px;height:20px;background:#e2e6ea"></div>
<div class="a" style="left:196px;top:645px;width:14px;height:17px;background:linear-gradient(90deg,#e4ecf6,#c4d6f0 60%,#dde4ee)"></div>
<div class="a" style="left:203px;top:646px;width:882px;height:16px;border-radius:8px 0 0 8px;background:linear-gradient(#f8f8f8,#ececec 50%,#d0d0d0 90%,#a8a8a8)"></div>
<div class="a" style="left:211px;top:647px;font-weight:bold;font-size:12.4px;letter-spacing:0.25px;line-height:14px;white-space:pre">X: 8.49</div>
<div class="a" style="left:272px;top:647px;font-weight:bold;font-size:12.4px;letter-spacing:0.25px;line-height:14px;white-space:pre">Y: 4.44</div>
<!-- bottom band -->
<div class="a" style="left:190px;top:662px;width:900px;height:8px;border-radius:0 0 6px 6px;background:linear-gradient(#5c6878 0,#c4d8f2 1px,#a4c0e8 4px,#80a6dc 8px)"></div>

<div class="tb" style="left:190px;top:51px;width:900px">
  <div class="pill"><div class="pc"></div>
   <div class="ttl" style="left:18px;color:#000">Integrale von Funktionen in expliziter Form</div></div>
  <div class="circ" style="left:5px;top:7px;width:15px;height:15px"></div>
  <div class="circ" style="left:24px;top:10px;width:9px;height:9px"></div>
  <div class="circ" style="left:38px;top:3px;width:8px;height:8px"></div>
  <div class="circ" style="left:38px;top:17px;width:8px;height:8px"></div>
</div>

<!-- menu pills -->
<div class="mp" style="left:200px;width:43px">D<u>a</u>tei</div>
<div class="mp" style="left:245px;width:81px;padding-left:8px;letter-spacing:0.03px"><u>E</u>instellungen</div>
<div class="mp" style="left:328px;width:45px"><u>Z</u>oom</div>
<div class="mp" style="left:375px;width:54px;padding-left:8px;letter-spacing:0.0px"><u>O</u>bjekte</div>
<div class="mp d" style="left:431px;width:91px;padding-left:8px;letter-spacing:0.32px"><u>T</u>ransformation</div>
<div class="mp d" style="left:524px;width:66px;padding-left:7px;letter-spacing:0.3px"><u>D</u>arstellen</div>
<div class="mp d" style="left:592px;width:75px;padding-left:7px;letter-spacing:0.33px">Ei<u>g</u>enschaft</div>
<div class="mp d" style="left:668px;width:81px;padding-left:8px;letter-spacing:0.48px">Be<u>s</u>chriftung</div>
<div class="mp" style="left:751px;width:58px;padding-left:8px;letter-spacing:0.22px">Dr<u>u</u>cken</div>
<div class="mp" style="left:810px;width:41px"><u>H</u>ilfe</div>


<!-- toolbar icons -->
<svg class="a" style="left:196px;top:100px" width="889" height="26" viewBox="196 100 889 26" shape-rendering="crispEdges">
 <g fill="none">
  <!-- separators -->
  <g stroke="#8c8c8c" stroke-width="1">
   <path d="M226.5 103V123M257.5 103V123M284.5 103V123M334.5 103V123M365.5 103V123M396.5 103V123M450.5 103V123M504.5 103V123M558.5 103V123M591.5 103V123M624.5 103V123M682.5 103V123M714.5 103V123"/>
  </g>
  <g stroke="#fbfbfb" stroke-width="1">
   <path d="M227.5 103V123M258.5 103V123M285.5 103V123M335.5 103V123M366.5 103V123M397.5 103V123M451.5 103V123M505.5 103V123M559.5 103V123M592.5 103V123M625.5 103V123M683.5 103V123M715.5 103V123"/>
  </g>
  <!-- pressed/raised button zoom-out -->
  <path d="M262.5 123V102.5H284" stroke="#fafafa"/>
 </g>
 <!-- icon1 -->
 <rect x="207" y="107" width="9" height="14" fill="#8a8a8a" stroke="#000" stroke-width="2"/>
 <rect x="208" y="108" width="7" height="3" fill="#fff"/>
 <!-- glasses -->
 <g shape-rendering="auto" fill="none" stroke="#000" stroke-width="1.4">
  <rect x="235.5" y="113.5" width="4.5" height="5" rx="1.5"/>
  <rect x="242" y="113.5" width="4.5" height="5" rx="1.5"/>
  <path d="M240 115.5h2M236 113.5L240 108.5L241 113M246.5 114L250 109.5L250.8 111.5"/>
 </g>
 <!-- zoom out -->
 <g shape-rendering="auto">
  <circle cx="271.5" cy="111.5" r="4.6" fill="#f0dde0" stroke="#000" stroke-width="1.6"/>
  <path d="M269 111.5h5" stroke="#d01818" stroke-width="1.6"/>
  <path d="M275 115L281.5 121" stroke="#000" stroke-width="2.4"/>
 </g>
 <!-- zoom gray -->
 <g shape-rendering="auto" fill="none" stroke="#a8a8a8">
  <circle cx="294.5" cy="111.3" r="4.5" stroke-width="1.5"/>
  <circle cx="294.5" cy="111.3" r="1.8" stroke-width="1"/>
  <path d="M298 115L304 121" stroke-width="1.8"/>
 </g>
 <!-- zoom in -->
 <g shape-rendering="auto">
  <circle cx="317.5" cy="111.5" r="4.6" fill="#f0dde0" stroke="#000" stroke-width="1.6"/>
  <path d="M315 111.5h5M317.5 109v5" stroke="#d01818" stroke-width="1.6"/>
  <path d="M321 115L327.5 121" stroke="#000" stroke-width="2.4"/>
 </g>
 <!-- clipboard icon -->
 <g shape-rendering="auto">
  <rect x="344" y="111" width="13" height="9.5" fill="#fff" stroke="#000" stroke-width="1.5"/>
  <path d="M346 114.5h2M349.5 114.5h5M346 117.5h2M349.5 117.5h5" stroke="#000" stroke-width="1.2"/>
  <path d="M348 112L352 107.5L358 107.5L358.5 111L353 111" fill="#606060" stroke="#000" stroke-width="1"/>
  <rect x="356.5" y="107" width="2.5" height="4" fill="#000080"/>
 </g>
 <!-- window icon -->
 <g fill="none" stroke="#8c8c8c" stroke-width="1">
  <path d="M374.5 119.5V108.5H386.5V112.5M374.5 110.5H386.5M374.5 119.5H380.5M380.5 112.5H389.5V119.5H380.5V112.5M380.5 114.5H389.5"/>
 </g>
 <!-- small square -->
 <g fill="none" stroke="#8c8c8c">
  <rect x="407.5" y="109.5" width="10" height="10"/>
  <path d="M411 113.5h3M411 115.5h3"/>
  <rect x="428.5" y="109.5" width="14" height="10" stroke-dasharray="2 1"/>
  <rect x="431.5" y="111.5" width="3" height="6"/>
  <rect x="436.5" y="111.5" width="3" height="6"/>
 </g>
 <!-- circle 1 / circle A -->
 <g fill="none" stroke="#8c8c8c">
  <rect x="460.5" y="107.5" width="13" height="13"/>
  <rect x="481.5" y="107.5" width="13" height="13"/>
 </g>
 <g fill="none" stroke="#8c8c8c" shape-rendering="auto">
  <circle cx="467" cy="114" r="4.3"/>
  <path d="M466 111.8L467.3 110.5V117.5" stroke-width="1.2"/>
  <circle cx="488" cy="114" r="4.3"/>
  <path d="M486 117V112h4v5M486 114.5h4" stroke-width="1"/>
 </g>
 <!-- table -->
 <g fill="none" stroke="#8c8c8c">
  <rect x="513.5" y="108.5" width="15" height="12"/>
  <path d="M513.5 110.5h15" stroke="#6c6c6c" stroke-width="2"/>
  <path d="M514 113.5h14M514 116.5h14M517.5 111v9M521.5 111v9M525.5 111v9" stroke="#a0a0a0"/>
 </g>
 <!-- table overlay -->
 <g fill="none" stroke="#8c8c8c">
  <path d="M538.5 112.5V121.5H550.5V109.5L547.5 106.5H541.5"/>
  <path d="M540 116.5h10M540 119h10M544.5 114v7M547.5 114v7" stroke="#a0a0a0"/>
 </g>
 <g shape-rendering="auto"><path d="M535.5 106.5L541 106.5L546 111L542 115.5L535.5 109Z" fill="#909090" stroke="#707070"/><path d="M538 109.5L543 114" stroke="#ddd" stroke-width="1.2"/></g>
 <!-- split -->
 <g fill="none" stroke="#8c8c8c">
  <rect x="568.5" y="109.5" width="5" height="10"/>
  <rect x="576.5" y="116.5" width="6" height="3"/>
  <path d="M576.5 110.5H580.5V114.5" />
  <path d="M576 110.5L578 108.5M576 110.5L578 112.5"/>
 </g>
 <!-- pages -->
 <g fill="#e8e8e8" stroke="#8c8c8c">
  <rect x="601.5" y="105.5" width="7" height="13"/>
  <rect x="603.5" y="106.5" width="7" height="13"/>
  <rect x="605.5" y="107.5" width="9" height="12.5"/>
 </g>
 <!-- X icons -->
 <g shape-rendering="auto" fill="none" stroke="#8c8c8c" stroke-width="1.3">
  <path d="M637.5 108.5L647.5 118.5M647.5 108.5L637.5 118.5"/>
  <circle cx="642.5" cy="113.5" r="2.5"/>
  <path d="M661.5 108L673.5 119.5M673.5 108L661.5 119.5"/>
  <circle cx="667.5" cy="113.8" r="3.5"/>
 </g>
 <!-- printer -->
 <g shape-rendering="auto">
  <path d="M694.8 112.8V105.6H700.3L703 108.8V112.8" fill="#fff" stroke="#000" stroke-width="1.3"/>
  <path d="M700.3 105.8V109H703" fill="none" stroke="#000" stroke-width="0.8"/>
  <path d="M696.3 107.3h1.4M696.3 109.5h1.6M696.3 111.4h3.6M701 111.4h1" stroke="#000" stroke-width="1"/>
  <rect x="691.6" y="113.4" width="15" height="6.9" fill="#fff" stroke="#000" stroke-width="1.4"/>
  <path d="M691.6 117.3h15" stroke="#000" stroke-width="1.3"/>
  <path d="M703.8 115.4h1.2" stroke="#303030" stroke-width="1"/>
 </g>
 <!-- question -->
 <g shape-rendering="auto" fill="none" stroke-linecap="round" stroke-linejoin="round">
  <path d="M727.6 110C727.6 107.6 729.3 106.8 731.2 106.8C733.4 106.8 735 108 735 109.8C735 111.7 731.9 112.3 731.6 114.3V115.6" stroke="#000" stroke-width="3.6"/>
  <path d="M727.6 110C727.6 107.6 729.3 106.8 731.2 106.8C733.4 106.8 735 108 735 109.8C735 111.7 731.9 112.3 731.6 114.3V115.6" stroke="#e4e45a" stroke-width="1.5"/>
  <path d="M731.6 118.4v0.2" stroke="#000" stroke-width="3"/>
  <path d="M731.6 118.4v0.2" stroke="#d8d850" stroke-width="0.9"/>
 </g>
</svg>


<!-- ===== dialog ===== -->
<div class="a" style="left:563px;top:570px;width:527px;height:93px;background:#d8d8d8;border-left:1px solid #707070;border-right:1px solid #909090"></div>
<div class="a" style="left:569px;top:578px;width:514px;height:82px;border-top:2px solid #505050;border-left:2px solid #505050;border-right:1px solid #f8f8f8;border-bottom:2px solid #f4f4f4;background:#e0e0e0"></div>
<div class="a" style="left:571px;top:580px;width:511px;height:78px;border-top:1px solid #fafafa;border-left:1px solid #fafafa;border-right:1px solid #909090;border-bottom:1px solid #707070"></div>
<!-- group boxes -->
<div class="a" style="left:578px;top:587px;width:265px;height:25px;border-top:1px solid #707070;border-left:1px solid #707070;border-right:2px solid #fafafa;border-bottom:2px solid #fafafa"></div>
<div class="a" style="left:578px;top:619px;width:265px;height:33px;border-top:1px solid #707070;border-left:1px solid #707070;border-right:2px solid #fafafa;border-bottom:2px solid #fafafa"></div>
<div class="a" style="left:850px;top:587px;width:226px;height:66px;border-top:1px solid #707070;border-left:1px solid #707070;border-right:2px solid #fafafa;border-bottom:2px solid #fafafa"></div>
<!-- checkboxes -->
<div class="cb" style="left:586px;top:594px"><svg width="11" height="11"><path d="M2.2 4.3L4.4 8.2L8.8 2.6" stroke="#000" stroke-width="2.5" fill="none"/></svg></div>
<div class="cb" style="left:738px;top:594px"><svg width="11" height="11"><path d="M2.2 4.3L4.4 8.2L8.8 2.6" stroke="#000" stroke-width="2.5" fill="none"/></svg></div>
<div class="cb" style="left:586px;top:629px"><svg width="11" height="11"><path d="M2.2 4.3L4.4 8.2L8.8 2.6" stroke="#000" stroke-width="2.5" fill="none"/></svg></div>
<div class="cb" style="left:738px;top:629px"></div>
<div class="dt" style="left:604px;top:593px;letter-spacing:0.15px">Bereich beschriften</div>
<div class="dt" style="left:756px;top:593px">Koordinaten</div>
<div class="dt" style="left:604px;top:628px">Bereichsmarkierung</div>
<div class="dt" style="left:756px;top:628px;letter-spacing:0.3px">Nur I-Bereich</div>
<!-- buttons -->
<div class="btn" style="left:862px;top:595px;width:95px;height:20px"></div>
<div class="btn" style="left:862px;top:625px;width:95px;height:20px"></div>
<div class="btn" style="left:967px;top:609px;width:95px;height:20px"></div>
<div class="dt" style="left:899px;top:599px">P<u>u</u>nkte</div>
<div class="dt" style="left:889px;top:629px"><u>S</u>imulation</div>
<div class="dt" style="left:992px;top:613px"><u>A</u>usblenden</div>
<svg class="a" style="left:860px;top:590px" width="210" height="60" viewBox="860 590 210 60">
 <path d="M882.2 599L893.8 610.6M893.8 599L882.2 610.6" stroke="#404060" stroke-width="1"/>
 <rect x="886.2" y="603.4" width="3.6" height="3.6" fill="#fff" stroke="#000" stroke-width="1.3"/>
 <path d="M876.3 631A4.8 4.8 0 1 0 881.5 630.8" fill="none" stroke="#101068" stroke-width="2.2"/>
 <path d="M879.5 628.8L884.3 628.6L882.6 633Z" fill="#101068"/>
 <g fill="none" stroke="#000" stroke-width="1.3">
  <path d="M974.8 611.8H983L985.2 614V626.3H974.8Z" fill="#fff"/>
  <path d="M971.8 613.6H974.5M971.8 613.6V620.6M970.8 620.6H974"/>
  <path d="M976.2 614.4H982.6M976.4 617.2H983.2M973 619.6H982" stroke-width="1.1"/>
  <path d="M976.5 624.2L979 621.6L981.5 624.2M983 616V618.5" stroke-width="1"/>
 </g>
</svg>
<div class="tb" style="left:563px;top:549px;width:527px">
  <div class="pill"><div class="pc"></div>
   <div class="ttl" style="left:18px;color:#7c7c7c">Integrale von Funktionen in expliziter Form</div></div>
  <div class="circ" style="left:5px;top:7px;width:15px;height:15px"></div>
  <div class="circ" style="left:24px;top:10px;width:9px;height:9px"></div>
  <div class="circ" style="left:38px;top:3px;width:8px;height:8px"></div>
  <div class="circ" style="left:38px;top:17px;width:8px;height:8px"></div>
</div>
<div class="a" style="left:563px;top:662px;width:527px;height:8px;border-radius:0 0 6px 6px;background:linear-gradient(#5c6878 0,#c4d8f2 1px,#a4c0e8 4px,#80a6dc 8px)"></div>

<!-- main status bar -->
<div class="a" style="left:0;top:687px;width:1280px;height:33px;background:#e0e0e0"></div>
<div class="a" style="left:0;top:687px;width:6px;height:26px;background:#d8d8d8;border-left:1px solid #909090;border-right:2px solid #8c8c8c"></div>
<div class="a" style="left:1274px;top:687px;width:6px;height:26px;background:#d8d8d8;border-left:1px solid #f0f0f0;border-right:1px solid #909090"></div>
<div class="a" style="left:6px;top:687px;width:1268px;height:1px;background:#f4f4f4"></div>
<div class="sp" style="left:6px;width:92px"></div>
<div class="sp" style="left:100px;width:1090px"></div>
<div class="sp" style="left:1191px;width:84px"></div>
<div class="st" style="left:13px;font-size:10.3px">MATHPROF 5.0</div>
<div class="st" style="left:104px;font-size:10.95px">Integrale von Funktionen in expliziter Form</div>
<div class="st" style="left:1198px;font-size:10.8px">Professional</div>
<div class="a" style="left:0;top:712px;width:1280px;height:1px;background:#7c7c7c"></div>
<div class="a" style="left:0;top:713px;width:1280px;height:6px;background:linear-gradient(#c8dcf4,#a8c4ec 50%,#8cb0e4)"></div>
<div class="a" style="left:0;top:719px;width:1280px;height:1px;background:#f0f0f0"></div>
</body></html>
